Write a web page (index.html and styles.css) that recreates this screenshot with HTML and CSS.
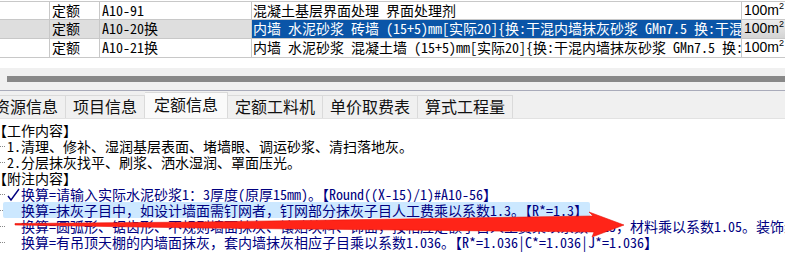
FILE: index.html
```html
<!DOCTYPE html>
<html lang="zh-CN">
<head>
  <meta charset="UTF-8">
  <title>定额信息</title>
  <link rel="stylesheet" href="styles.css">
</head>
<body>
  <div class="grid">
    <div class="row first">
      <div class="cell c0"></div>
      <div class="cell c1">定额</div>
      <div class="cell c2">A10-91</div>
      <div class="cell c3">混凝土基层界面处理 界面处理剂</div>
      <div class="cell c4">100m<sup>2</sup></div>
    </div>
    <div class="row current">
      <div class="cell c0"></div>
      <div class="cell c1">定额</div>
      <div class="cell c2">A10-20换</div>
      <div class="cell c3 selected">内墙 水泥砂浆 砖墙 (15+5)mm[实际20]{换:干混内墙抹灰砂浆 GMn7.5 换:干混地面砂浆 DSM20}</div>
      <div class="cell c4">100m<sup>2</sup></div>
    </div>
    <div class="row">
      <div class="cell c0"></div>
      <div class="cell c1">定额</div>
      <div class="cell c2">A10-21换</div>
      <div class="cell c3">内墙 水泥砂浆 混凝土墙 (15+5)mm[实际20]{换:干混内墙抹灰砂浆 GMn7.5 换:干混地面砂浆 DSM20}</div>
      <div class="cell c4">100m<sup>2</sup></div>
    </div>
  </div>

  <div class="gap"></div>
  <div class="hscroll"><div class="thumb"></div></div>

  <div class="tabs">
    <div class="tab cut">资源信息</div>
    <div class="tab">项目信息</div>
    <div class="tab active">定额信息</div>
    <div class="tab">定额工料机</div>
    <div class="tab">单价取费表</div>
    <div class="tab">算式工程量</div>
  </div>

  <div class="content">
    <div class="head">【工作内容】</div>
    <div class="line"><span class="dots"></span><span>1.清理、修补、湿润基层表面、堵墙眼、调运砂浆、清扫落地灰。</span></div>
    <div class="line"><span class="dots"></span><span>2.分层抹灰找平、刷浆、洒水湿润、罩面压光。</span></div>
    <div class="head">【附注内容】</div>
    <div class="line note">
      <span class="dots"></span>
      <span class="item">
        <svg class="check" width="14" height="16" viewBox="0 0 14 16"><polyline points="1,10 4,14 12,3" fill="none" stroke="#00007f" stroke-width="1.4"/></svg>
        <span>换算=请输入实际水泥砂浆1：3厚度(原厚15mm)。【Round((X-15)/1)#A10-56】</span>
      </span>
    </div>
    <div class="line note">
      <span class="dots"></span>
      <span class="item hl"><span class="slot"></span><span>换算=抹灰子目中，如设计墙面需钉网者，钉网部分抹灰子目人工费乘以系数1.3。【R*=1.3】</span></span>
    </div>
    <div class="line note">
      <span class="dots"></span>
      <span class="item"><span class="slot"></span><span>换算=圆弧形、锯齿形、不规则墙面抹灰、镶贴块料、饰面，按相应定额子目人工费乘以系数1.15，材料乘以系数1.05。装饰线条抹灰</span></span>
    </div>
    <div class="line note">
      <span class="dots"></span>
      <span class="item"><span class="slot"></span><span>换算=有吊顶天棚的内墙面抹灰，套内墙抹灰相应子目乘以系数1.036。【R*=1.036|C*=1.036|J*=1.036】</span></span>
    </div>

    <!-- red marker arrow drawn over the third note -->
    <svg class="arrow" width="640" height="40" viewBox="0 200 640 40">
      <path d="M15,223.5 L200,222 L400,219 L593,216 L589,212 L624,225 L592,237 L594,232 L400,230 L200,228 L15,225 Z" fill="#ff2418" stroke="#e8140c" stroke-width="0.6"/>
    </svg>
  </div>
</body>
</html>
```

FILE: styles.css
```css
body {
  margin: 0;
  width: 785px;
  height: 273px;
  overflow: hidden;
  background: #fff;
  font-family: "Noto Sans Mono CJK SC", "Noto Sans CJK SC", monospace;
  font-size: 14px;
  color: #000;
}

.grid {
  padding-top: 1px;
}

.row {
  display: flex;
  height: 19px;
  box-sizing: border-box;
  border-bottom: 1px solid #c8c8c8;
  white-space: nowrap;
}

.row.first {
  border-top: 1px solid #c8c8c8;
}

.cell {
  box-sizing: border-box;
  border-right: 1px solid #c8c8c8;
  line-height: 17px;
  overflow: hidden;
  padding-left: 2px;
  flex: none;
}

.c0 { width: 50px; }
.c1 { width: 50px; }
.c2 { width: 152px; }
.c3 { width: 490px; padding-left: 1px; }
.c4 {
  width: 43px;
  border-right: none;
  font-family: "Liberation Sans", Arial, sans-serif;
  font-size: 14px;
}

.c4 sup {
  font-size: 9px;
  vertical-align: 6px;
  line-height: 0;
}

.current .c0,
.current .c1,
.current .c2 {
  background: #dedede;
}

.current .c4 {
  background: linear-gradient(#ececec, #d4d4d4);
}

.selected {
  background: #0a55a8;
  color: #fff;
}

.gap {
  height: 10px;
}

.hscroll {
  height: 22px;
  background: #f0f0f0;
  padding-top: 8px;
  box-sizing: border-box;
}

.thumb {
  height: 6px;
  margin-left: 7px;
  background: #888;
}

.tabs {
  display: flex;
  align-items: flex-end;
  height: 29px;
  box-sizing: border-box;
  border-top: 1px solid #a9abba;
  border-bottom: 1px solid #e2e2e2;
  background: #f0f0f0;
  font-family: "Noto Sans CJK SC", sans-serif;
  font-size: 16px;
  color: #111;
}

.tab {
  height: 22px;
  line-height: 21px;
  padding: 0 7px;
  border: 1px solid #dadada;
  border-bottom: none;
  border-left: none;
  white-space: nowrap;
}

.tab.cut {
  margin-left: -13px;
}

.tab.active {
  height: 25px;
  line-height: 23px;
  padding: 0 9px;
  background: #fafafa;
}

.content {
  position: relative;
  padding-top: 3px;
  white-space: nowrap;
}

.head,
.line {
  height: 16px;
  line-height: 16px;
  display: flex;
  align-items: center;
}

.head {
  margin-left: -7px;
}

.dots {
  width: 6px;
  height: 1px;
  margin-right: 1px;
  flex: none;
  background: repeating-linear-gradient(90deg, #888 0 1px, transparent 1px 2px);
}

.note {
  color: #00007f;
}

.item {
  display: flex;
  align-items: center;
  height: 16px;
}

.check,
.slot {
  width: 14px;
  height: 16px;
  flex: none;
}

.hl {
  background: #cce8ff;
  margin-left: -4px;
  padding-left: 4px;
  padding-right: 2px;
  border-radius: 2px;
}

/* content starts at y=119, so the arrow's page y 200 sits at 81 */
.arrow {
  position: absolute;
  left: 0;
  top: 81px;
}
```
